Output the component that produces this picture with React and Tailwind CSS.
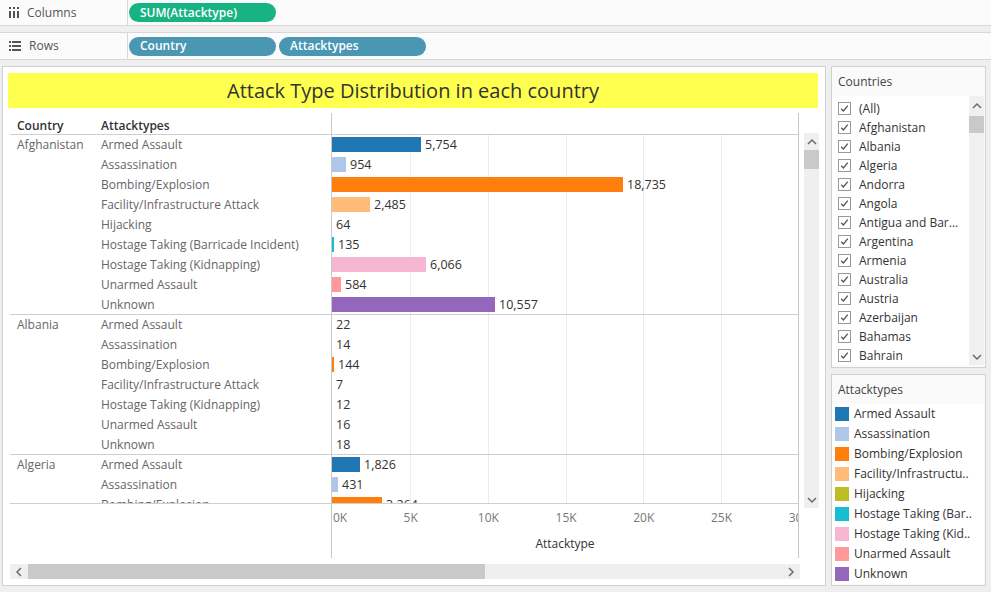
import React from 'react';

const COLORS = {
  'Armed Assault': 'bg-[#1f77b4]',
  'Assassination': 'bg-[#aec7e8]',
  'Bombing/Explosion': 'bg-[#ff7f0e]',
  'Facility/Infrastructure Attack': 'bg-[#ffbb78]',
  'Hijacking': 'bg-[#bcbd22]',
  'Hostage Taking (Barricade Incident)': 'bg-[#17becf]',
  'Hostage Taking (Kidnapping)': 'bg-[#f7b6d2]',
  'Unarmed Assault': 'bg-[#ff9896]',
  'Unknown': 'bg-[#9467bd]',
};

const groups = [
  {
    country: 'Afghanistan',
    rows: [
      ['Armed Assault', 5754],
      ['Assassination', 954],
      ['Bombing/Explosion', 18735],
      ['Facility/Infrastructure Attack', 2485],
      ['Hijacking', 64],
      ['Hostage Taking (Barricade Incident)', 135],
      ['Hostage Taking (Kidnapping)', 6066],
      ['Unarmed Assault', 584],
      ['Unknown', 10557],
    ],
  },
  {
    country: 'Albania',
    rows: [
      ['Armed Assault', 22],
      ['Assassination', 14],
      ['Bombing/Explosion', 144],
      ['Facility/Infrastructure Attack', 7],
      ['Hostage Taking (Kidnapping)', 12],
      ['Unarmed Assault', 16],
      ['Unknown', 18],
    ],
  },
  {
    country: 'Algeria',
    rows: [
      ['Armed Assault', 1826],
      ['Assassination', 431],
      ['Bombing/Explosion', 3264],
      ['Facility/Infrastructure Attack', 251],
    ],
  },
];

const countries = [
  '(All)', 'Afghanistan', 'Albania', 'Algeria', 'Andorra', 'Angola', 'Antigua and Bar...',
  'Argentina', 'Armenia', 'Australia', 'Austria', 'Azerbaijan', 'Bahamas', 'Bahrain',
];

const legend = [
  ['Armed Assault', 'bg-[#1f77b4]'],
  ['Assassination', 'bg-[#aec7e8]'],
  ['Bombing/Explosion', 'bg-[#ff7f0e]'],
  ['Facility/Infrastructu..', 'bg-[#ffbb78]'],
  ['Hijacking', 'bg-[#bcbd22]'],
  ['Hostage Taking (Bar..', 'bg-[#17becf]'],
  ['Hostage Taking (Kid..', 'bg-[#f7b6d2]'],
  ['Unarmed Assault', 'bg-[#ff9896]'],
  ['Unknown', 'bg-[#9467bd]'],
];

const PX_PER_UNIT = 466 / 30000;
const ticks = ['0K', '5K', '10K', '15K', '20K', '25K', '30K'];

function Chevron({ dir }) {
  const d = {
    up: 'M1 6 L5 2 L9 6',
    down: 'M1 2 L5 6 L9 2',
    left: 'M6 1 L2 5 L6 9',
    right: 'M2 1 L6 5 L2 9',
  }[dir];
  const vertical = dir === 'up' || dir === 'down';
  return (
    <svg width={vertical ? 10 : 8} height={vertical ? 8 : 10} viewBox={vertical ? '0 0 10 8' : '0 0 8 10'}>
      <path d={d} fill="none" stroke="#6b6b6b" strokeWidth="1.5" />
    </svg>
  );
}

function Check() {
  return (
    <div className="w-[13px] h-[13px] border border-[#9a9a9a] bg-white flex items-center justify-center shrink-0">
      <svg width="11" height="11" viewBox="0 0 11 11">
        <path d="M2.2 5.8 L4.4 8 L8.8 2.6" fill="none" stroke="#555" strokeWidth="1.3" />
      </svg>
    </div>
  );
}

function Shelf({ icon, label, children, className }) {
  return (
    <div className={`flex h-[26px] bg-[#fbfbfb] border-[#d8d8d8] ${className}`}>
      <div className="w-[128px] border-r border-[#d8d8d8] flex items-center gap-[8px] pl-[9px] text-[12px] text-[#555]">
        {icon}
        <span>{label}</span>
      </div>
      <div className="flex items-center gap-[3px] pl-[1px]">{children}</div>
    </div>
  );
}

function Pill({ color, children }) {
  return (
    <div className={`w-[147px] h-[19px] rounded-full ${color} text-white text-[12px] font-semibold flex items-center pl-[11px]`}>
      {children}
    </div>
  );
}

export default function App() {
  return (
    <div className="w-[991px] h-[592px] overflow-hidden bg-[#efefef] font-['Open_Sans','Liberation_Sans',sans-serif]">
      {/* shelves */}
      <Shelf
        className="border-b"
        label="Columns"
        icon={
          <svg width="10" height="11" viewBox="0 0 10 11">
            <rect x="0" y="0" width="2" height="2" fill="#555" />
            <rect x="4" y="0" width="2" height="2" fill="#555" />
            <rect x="8" y="0" width="2" height="2" fill="#555" />
            <rect x="0" y="4" width="2" height="7" fill="#555" />
            <rect x="4" y="4" width="2" height="7" fill="#555" />
            <rect x="8" y="4" width="2" height="7" fill="#555" />
          </svg>
        }
      >
        <Pill color="bg-[#18b383]">SUM(Attacktype)</Pill>
      </Shelf>
      <Shelf
        className="border-y mt-[6px] h-[28px]"
        label="Rows"
        icon={
          <svg width="12" height="10" viewBox="0 0 12 10">
            <rect x="0" y="0" width="2" height="2" fill="#555" />
            <rect x="3" y="0" width="9" height="2" fill="#555" />
            <rect x="0" y="4" width="2" height="2" fill="#555" />
            <rect x="3" y="4" width="9" height="2" fill="#555" />
            <rect x="0" y="8" width="2" height="2" fill="#555" />
            <rect x="3" y="8" width="9" height="2" fill="#555" />
          </svg>
        }
      >
        <Pill color="bg-[#4a97b3]">Country</Pill>
        <Pill color="bg-[#4a97b3]">Attacktypes</Pill>
      </Shelf>

      <div className="flex gap-[5px] mt-[6px] pl-[2px]">
        {/* worksheet */}
        <div className="w-[824px] h-[520px] bg-white border border-[#d0d0d0] pt-[6px] pl-[5px]">
          <div className="w-[810px] h-[35px] bg-[#ffff4f] flex items-center justify-center text-[20px] text-[#333]">
            Attack Type Distribution in each country
          </div>

          <div className="flex gap-[5px]">
            <div className="ml-[2px] w-[789px]">
              {/* header */}
              <div className="flex h-[27px] border-b border-[#cfcfcf]">
                <div className="w-[91px] pl-[7px] pt-[9px] text-[12px] leading-[17px] font-semibold text-[#333]">Country</div>
                <div className="w-[230px] pt-[9px] text-[12px] leading-[17px] font-semibold text-[#333]">Attacktypes</div>
                <div className="w-[468px] mt-[5px] border-x border-[#c8c8c8]" />
              </div>

              {/* rows */}
              <div className="relative h-[369px] overflow-hidden border-b border-[#cfcfcf]">
                {[78, 156, 234, 311, 389].map((x) => (
                  <div key={x} className="absolute top-0 bottom-0 w-px bg-[#ececec]" style={{ left: 322 + x }} />
                ))}
                <div className="relative">
                  {groups.map((g) => (
                    <div key={g.country} className="border-b border-[#cfcfcf]">
                      {g.rows.map(([type, v], i) => {
                        const w = Math.floor(v * PX_PER_UNIT);
                        const last = i === g.rows.length - 1;
                        return (
                          <div key={type} className={`flex ${last ? 'h-[19px]' : 'h-[20px]'}`}>
                            <div className="w-[91px] pl-[7px] text-[12px] text-[#666] leading-[20px]">
                              {i === 0 ? g.country : ''}
                            </div>
                            <div className="w-[230px] text-[12px] text-[#666] leading-[20px] whitespace-nowrap">{type}</div>
                            <div className="w-[468px] border-x border-[#c8c8c8] pt-[2px] flex items-start">
                              <div className={`h-[15px] ${COLORS[type]}`} style={{ width: w }} />
                              <span className="ml-[4px] text-[12.5px] leading-[15px] text-[#333]">
                                {v.toLocaleString('en-US')}
                              </span>
                            </div>
                          </div>
                        );
                      })}
                    </div>
                  ))}
                </div>
              </div>

              {/* axis */}
              <div className="flex h-[54px]">
                <div className="w-[321px]" />
                <div className="relative w-[468px] border-x border-[#c8c8c8] overflow-hidden">
                  {ticks.map((t, i) => (
                    <span
                      key={t}
                      className={`absolute top-[5px] text-[12px] text-[#777] ${i === 0 ? '' : '-translate-x-1/2'}`}
                      style={{ left: i === 0 ? 1 : i * 77.7 + 1 }}
                    >
                      {t}
                    </span>
                  ))}
                  <div className="absolute top-[31px] left-0 right-0 text-center text-[12px] text-[#333]">Attacktype</div>
                </div>
              </div>
            </div>

            {/* vertical scrollbar */}
            <div className="mt-[25px] w-[15px] h-[375px] bg-[#efefef] flex flex-col items-center">
              <div className="h-[17px] flex items-center justify-center">
                <Chevron dir="up" />
              </div>
              <div className="w-[15px] h-[19px] bg-[#c9c9c9]" />
              <div className="flex-1" />
              <div className="h-[17px] flex items-center justify-center">
                <Chevron dir="down" />
              </div>
            </div>
          </div>

          {/* horizontal scrollbar */}
          <div className="ml-[2px] mt-[6px] w-[790px] h-[15px] bg-[#efefef] flex items-center">
            <div className="w-[18px] flex justify-center">
              <Chevron dir="left" />
            </div>
            <div className="w-[457px] h-[15px] bg-[#c9c9c9]" />
            <div className="flex-1" />
            <div className="w-[18px] flex justify-center">
              <Chevron dir="right" />
            </div>
          </div>
        </div>

        {/* right column */}
        <div className="w-[155px] flex flex-col gap-[6px]">
          <div className="h-[302px] bg-[#fafafa] border border-[#d0d0d0] flex flex-col">
            <div className="h-[29px] pl-[6px] flex items-center text-[12px] text-[#444]">Countries</div>
            <div className="flex-1 bg-white flex mr-px mb-[2px]">
              <div className="flex-1 pt-[3px] pl-[6px]">
                {countries.map((c) => (
                  <div key={c} className="h-[19px] flex items-center gap-[8px]">
                    <Check />
                    <span className="text-[12px] text-[#333] whitespace-nowrap">{c}</span>
                  </div>
                ))}
              </div>
              <div className="w-[15px] bg-[#f0f0f0] flex flex-col items-center">
                <div className="h-[20px] flex items-center justify-center">
                  <Chevron dir="up" />
                </div>
                <div className="w-[15px] h-[17px] bg-[#c9c9c9]" />
                <div className="flex-1" />
                <div className="h-[17px] flex items-center justify-center">
                  <Chevron dir="down" />
                </div>
              </div>
            </div>
          </div>

          <div className="h-[212px] bg-[#fafafa] border border-[#d0d0d0] flex flex-col">
            <div className="h-[30px] pl-[6px] flex items-center text-[12px] text-[#444]">Attacktypes</div>
            <div className="flex-1 bg-white pl-[3px] mr-px mb-px">
              {legend.map(([name, color]) => (
                <div key={name} className="h-[20px] flex items-center gap-[5px]">
                  <div className={`w-[14px] h-[14px] ${color}`} />
                  <span className="text-[12px] text-[#333] whitespace-nowrap">{name}</span>
                </div>
              ))}
            </div>
          </div>
        </div>
      </div>
    </div>
  );
}
